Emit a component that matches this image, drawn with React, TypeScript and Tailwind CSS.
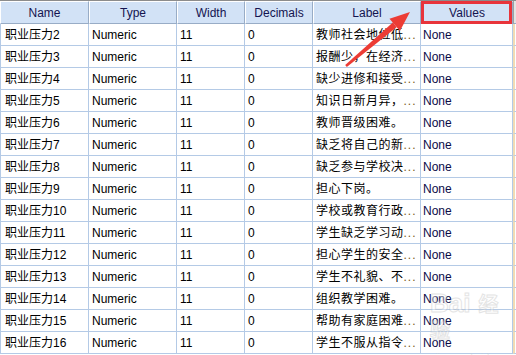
import React from "react";

const labels = [
  "教师社会地位低...",
  "报酬少，在经济...",
  "缺少进修和接受...",
  "知识日新月异，...",
  "教师晋级困难。",
  "缺乏将自己的新...",
  "缺乏参与学校决...",
  "担心下岗。",
  "学校或教育行政...",
  "学生缺乏学习动...",
  "担心学生的安全...",
  "学生不礼貌、不...",
  "组织教学困难。",
  "帮助有家庭困难...",
  "学生不服从指令...",
];

const headers = ["Name", "Type", "Width", "Decimals", "Label", "Values"];
const widths = ["w-[89px]", "w-[88px]", "w-[68px]", "w-[68px]", "w-[108px]", "w-[92px]"];

function LabelText({ text }: { text: string }) {
  if (text.endsWith("...")) {
    return (
      <span>
        {text.slice(0, -3)}
        <span className="text-[#7a5a20] tracking-[1px]">...</span>
      </span>
    );
  }
  return <span>{text}</span>;
}

export default function App() {
  return (
    <div
      className="relative w-[516px] h-[355px] overflow-hidden bg-white text-[12px] text-black"
      style={{ fontFamily: '"Liberation Sans", "Noto Sans CJK SC", sans-serif' }}
    >
      <div className="border-t border-[#8c8c8c] flex flex-col">
        <div className="flex h-[23px]">
          {headers.map((h, i) => (
            <div
              key={h}
              className={`${widths[i]} shrink-0 flex items-center justify-center bg-[#d2e2f6] border-t border-l border-t-white border-l-white border-r border-b border-r-[#98acc6] border-b-[#98acc6] text-[#141450] ${i === 0 ? "border-l-[#7c8798]" : ""}`}
            >
              {h}
            </div>
          ))}
          <div className="flex-1 bg-[#e4e4e4] border-l border-[#a0a0a0] border-b border-b-[#98acc6]" />
        </div>
        {labels.map((lab, idx) => (
          <div key={idx} className="flex h-[22px]">
            <div className="w-[89px] shrink-0 flex items-center pl-[4px] border-l border-r border-b border-[#b4cae6] whitespace-nowrap">
              职业压力{idx + 2}
            </div>
            <div className="w-[88px] shrink-0 flex items-center pl-[3px] border-r border-b border-[#b4cae6]">
              Numeric
            </div>
            <div className="w-[68px] shrink-0 flex items-center pl-[3px] border-r border-b border-[#b4cae6]">
              11
            </div>
            <div className="w-[68px] shrink-0 flex items-center pl-[3px] border-r border-b border-[#b4cae6]">
              0
            </div>
            <div className="w-[108px] shrink-0 flex items-center pl-[3px] border-r border-b border-[#b4cae6] whitespace-nowrap overflow-hidden tracking-[0.5px]">
              <LabelText text={lab} />
            </div>
            <div className="w-[92px] shrink-0 flex items-center pl-[2px] border-r border-b border-[#b4cae6] text-[#0c0c48]">
              None
            </div>
            <div className="flex-1 border-l-2 border-l-[#f2dcb4] border-b border-[#b4cae6]" />
          </div>
        ))}
      </div>

      {/* red highlight box on Values header */}
      <div className="absolute left-[421px] top-[1px] w-[91px] h-[23px] border-[3px] border-[#e8343b]" />

      {/* red arrow */}
      <svg className="absolute left-0 top-0 pointer-events-none" width="516" height="355">
        <polygon
          points="346.8,67 345.2,65 392.8,22.6 396.6,27.2"
          fill="#ec3c35"
        />
        <polygon points="410,12 389.5,18.8 399.9,31" fill="#ec3c35" />
      </svg>

      {/* faint watermark */}
      <div className="absolute left-[430px] top-[290px] pointer-events-none flex flex-col items-start opacity-40 leading-none">
        <div className="text-[26px] font-bold text-white leading-none" style={{ WebkitTextStroke: "1px #bdbdbd" }}>
          Bai<span className="text-[20px] ml-[8px]">经验</span>
        </div>
        <div className="text-[10px] leading-[12px] text-[#c8c8c8] ml-[6px] mt-[10px]">jingyan.baidu.com</div>
      </div>
    </div>
  );
}
